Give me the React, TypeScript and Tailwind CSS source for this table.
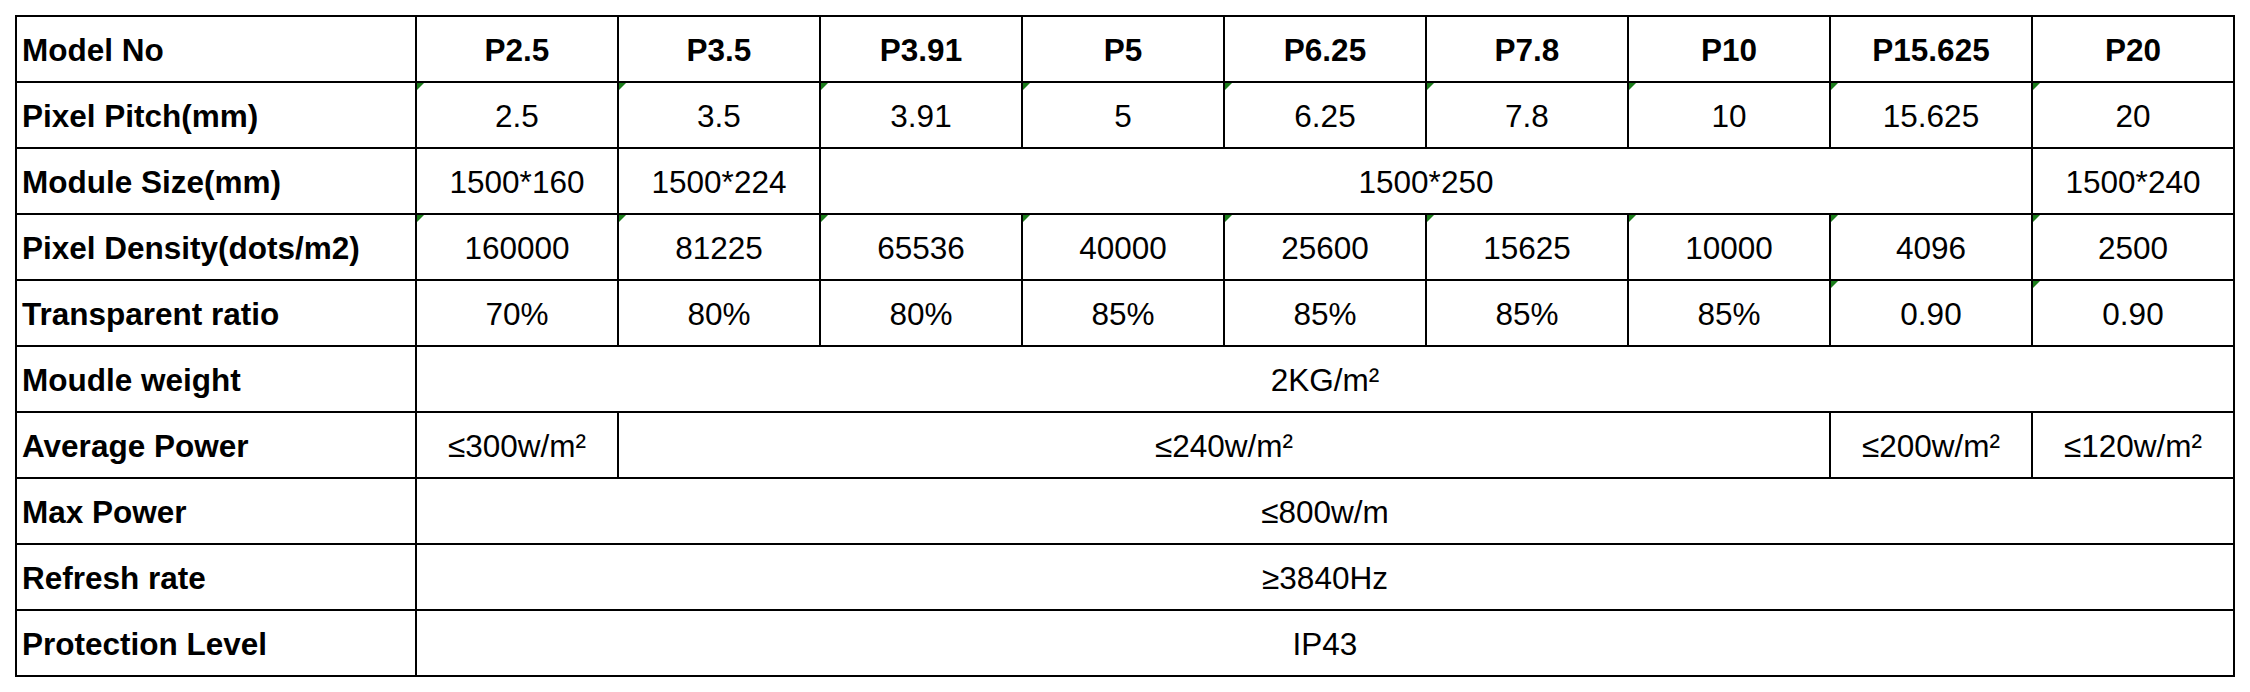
import React from "react";

type Cell = { text: string; span?: number; flag?: boolean };

const models = ["P2.5", "P3.5", "P3.91", "P5", "P6.25", "P7.8", "P10", "P15.625", "P20"];

const rows: { label: string; cells: Cell[] }[] = [
  {
    label: "Pixel Pitch(mm)",
    cells: ["2.5", "3.5", "3.91", "5", "6.25", "7.8", "10", "15.625", "20"].map((t) => ({ text: t, flag: true })),
  },
  {
    label: "Module Size(mm)",
    cells: [{ text: "1500*160" }, { text: "1500*224" }, { text: "1500*250", span: 6 }, { text: "1500*240" }],
  },
  {
    label: "Pixel Density(dots/m2)",
    cells: ["160000", "81225", "65536", "40000", "25600", "15625", "10000", "4096", "2500"].map((t) => ({ text: t, flag: true })),
  },
  {
    label: "Transparent ratio",
    cells: [
      { text: "70%" },
      { text: "80%" },
      { text: "80%" },
      { text: "85%" },
      { text: "85%" },
      { text: "85%" },
      { text: "85%" },
      { text: "0.90", flag: true },
      { text: "0.90", flag: true },
    ],
  },
  { label: "Moudle weight", cells: [{ text: "2KG/m²", span: 9 }] },
  {
    label: "Average Power",
    cells: [{ text: "≤300w/m²" }, { text: "≤240w/m²", span: 6 }, { text: "≤200w/m²" }, { text: "≤120w/m²" }],
  },
  { label: "Max Power", cells: [{ text: "≤800w/m", span: 9 }] },
  { label: "Refresh rate", cells: [{ text: "≥3840Hz", span: 9 }] },
  { label: "Protection Level", cells: [{ text: "IP43", span: 9 }] },
];

function Flag() {
  return (
    <span className="absolute left-0 top-0 h-0 w-0 border-r-[7px] border-t-[7px] border-r-transparent border-t-[#1b7d1b]" />
  );
}

export default function App() {
  return (
    <div className="min-h-[692px] bg-white pl-[15px] pt-[15px] font-['Liberation_Sans',Arial,sans-serif] text-[31.5px] leading-none text-black">
      <table className="table-fixed border-collapse">
        <colgroup>
          <col className="w-[400px]" />
          {models.map((m) => (
            <col key={m} className="w-[202px]" />
          ))}
        </colgroup>
        <tbody>
          <tr className="h-[66px]">
            <td className="border-2 border-black px-[5px] pt-[4px] text-left font-bold">Model No</td>
            {models.map((m) => (
              <td key={m} className="border-2 border-black pt-[4px] text-center font-bold">
                {m}
              </td>
            ))}
          </tr>
          {rows.map((r) => (
            <tr key={r.label} className="h-[66px]">
              <td className="border-2 border-black px-[5px] pt-[4px] text-left font-bold">{r.label}</td>
              {r.cells.map((c, i) => (
                <td key={i} colSpan={c.span} className="relative border-2 border-black pt-[4px] text-center">
                  {c.flag && <Flag />}
                  {c.text}
                </td>
              ))}
            </tr>
          ))}
        </tbody>
      </table>
    </div>
  );
}
